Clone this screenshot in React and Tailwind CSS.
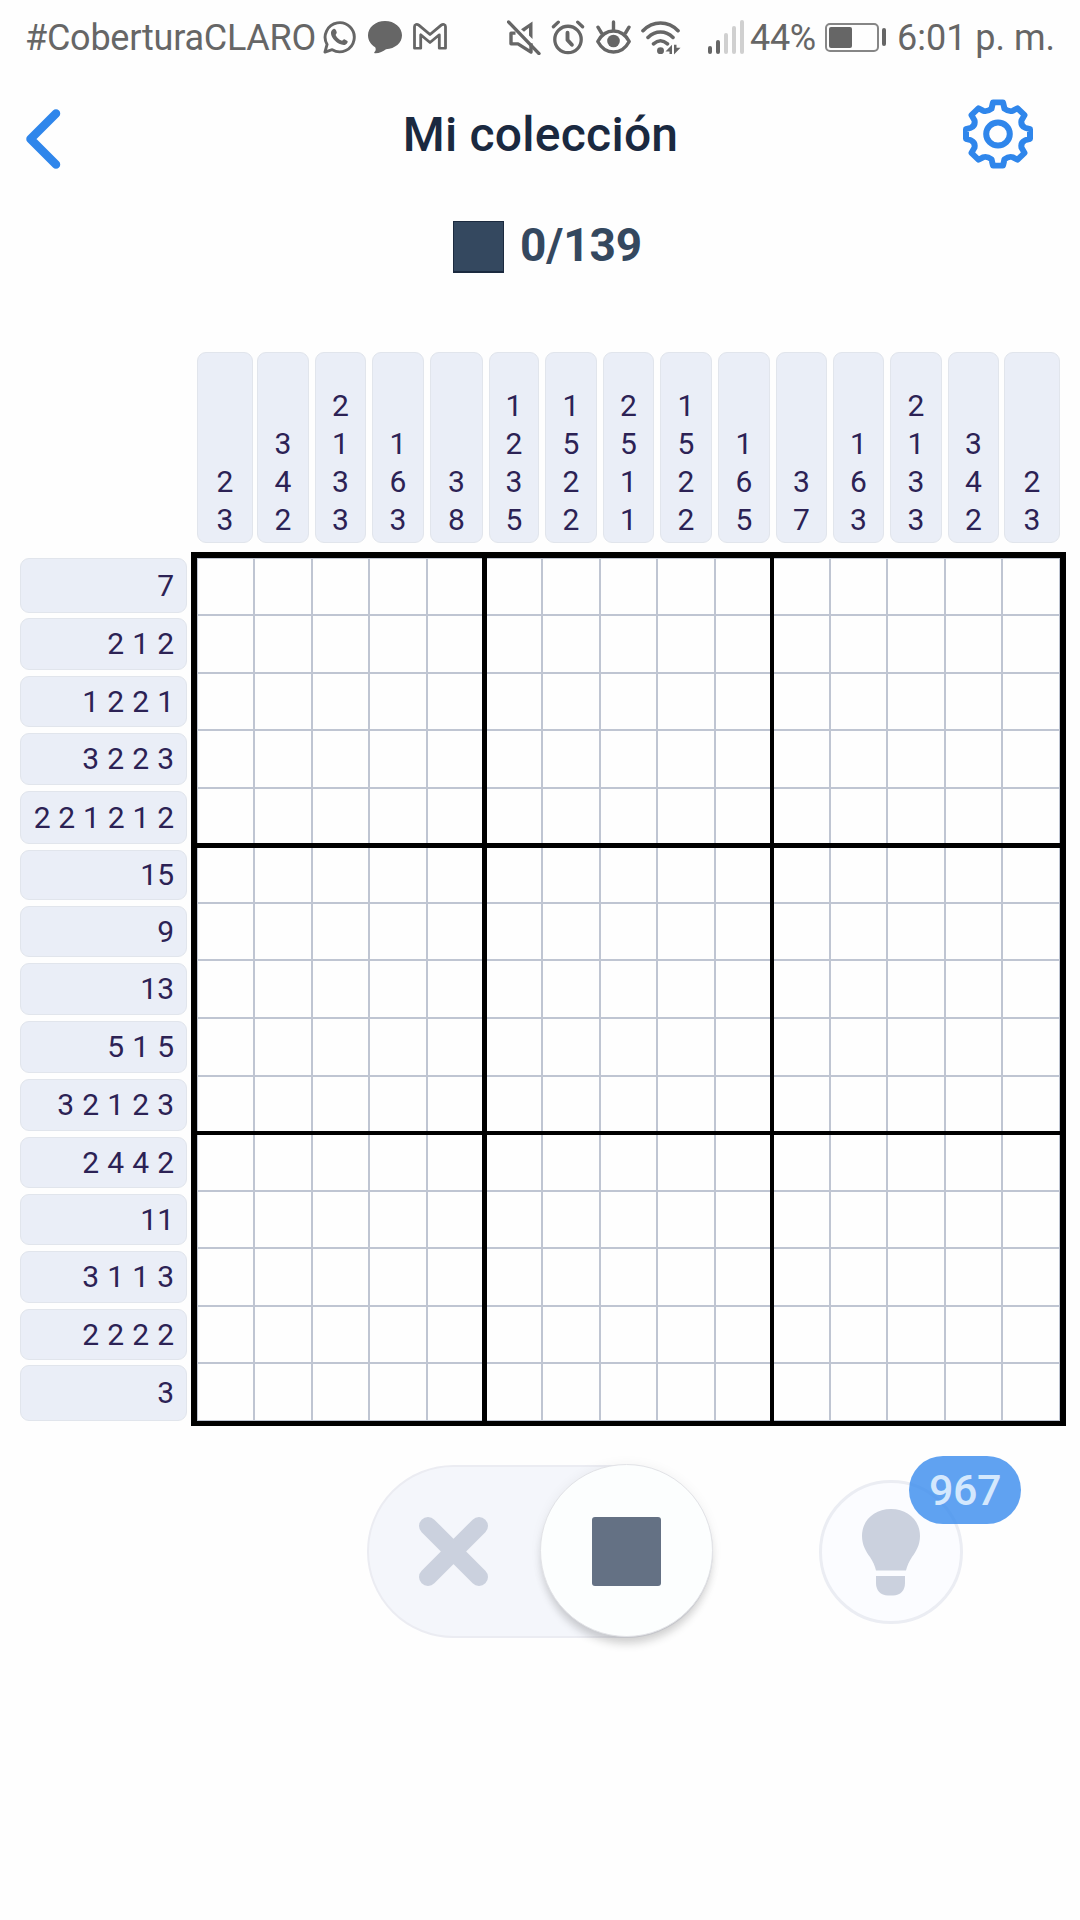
// Track sizes of the board; every track includes its trailing rule.
const TRACKS =
  "grid-cols-[58px_58px_57px_58px_59px_56px_58px_57px_58px_58px_57px_57px_58px_57px_57px]";
const ROW_TRACKS =
  "grid-rows-[58px_58px_57px_58px_59px_56px_57px_58px_58px_58px_57px_57px_58px_57px_57px]";

const COLS = [
  [2, 3], [3, 4, 2], [2, 1, 3, 3], [1, 6, 3], [3, 8],
  [1, 2, 3, 5], [1, 5, 2, 2], [2, 5, 1, 1], [1, 5, 2, 2], [1, 6, 5],
  [3, 7], [1, 6, 3], [2, 1, 3, 3], [3, 4, 2], [2, 3],
];

const ROWS = [
  "7", "2 1 2", "1 2 2 1", "3 2 2 3", "2 2 1 2 1 2",
  "15", "9", "13", "5 1 5", "3 2 1 2 3",
  "2 4 4 2", "11", "3 1 1 3", "2 2 2 2", "3",
];

function StatusBar() {
  return (
    <div className="flex h-[74px] items-center pl-[25px] text-[36px] text-[#666] leading-[72px] whitespace-nowrap">
      <span className="w-[298px] pt-[2px] tracking-[-0.25px]">#CoberturaCLARO</span>
      <svg className="h-[34px] w-[33px] shrink-0" viewBox="0 0 34 35" fill="none">
        <path d="M2 33 L4.2 25.2 A15 15 0 1 1 9.5 30.6 Z" stroke="#666" strokeWidth="3" strokeLinejoin="round" />
        <path d="M10.5 9.5 C12 8.5 13 9.5 14 12 C14.8 14 12.5 14.5 13.3 16 C14.5 18.5 16.5 20.2 19 21.2 C20.5 21.7 20.8 19.2 22.5 20 L25.2 21.6 C26 22.8 24.3 25.8 21.5 25.8 C15 25.8 8.2 18.5 8.2 13.5 C8.2 11.5 9.2 10.2 10.5 9.5 Z" fill="#666" />
      </svg>
      <svg className="ml-[12px] h-[34px] w-[34px] shrink-0" viewBox="0 0 34 34" fill="#666">
        <path d="M17 1 C26.5 1 34 7.4 34 15.3 C34 23.2 27 28.7 18 29.2 C15 31.5 11 33.6 6.8 33.3 C6 33 6 32.6 6.5 32 C8 30.5 8 29 7.2 27.2 C3 25 0 20.6 0 15.3 C0 7.4 7.5 1 17 1 Z" />
      </svg>
      <svg className="-mt-px ml-[11px] h-[27px] w-[34px] shrink-0" viewBox="0 0 34 28" preserveAspectRatio="none" fill="none" stroke="#666" strokeWidth="2.8" strokeLinejoin="round">
        <path d="M1.5 26.2 V3.8 C1.5 1.3 4 0.8 5.8 2.2 L17 12 L28.2 2.2 C30 0.8 32.5 1.3 32.5 3.8 V26.2 H26.3 V12.2 L17 20.2 L7.7 12.2 V26.2 Z" />
      </svg>
      <svg className="ml-[60px] h-[35px] w-[34px] shrink-0" viewBox="0 0 34 36" preserveAspectRatio="none" fill="none" stroke="#666" strokeWidth="3.4" strokeLinejoin="round">
        <path d="M8.5 13.5 H4 V24.5 H11 L24 33 V24" />
        <path d="M14 9.5 L25.5 1.5 V19.5 L22 16 V8 L17 12 Z" fill="#666" stroke="none" />
        <path d="M1.5 2 L32 34.5" strokeLinecap="round" />
      </svg>
      <svg className="ml-[10px] h-[35px] w-[34px] shrink-0" viewBox="0 0 34 36" fill="none" stroke="#666" strokeWidth="3.4" strokeLinecap="round">
        <circle cx="17" cy="20" r="13.6" />
        <path d="M16.5 13 V20.5 L21 25.5" strokeWidth="4" strokeLinejoin="round" />
        <path d="M2 7 L7 2.2 M32 7 L27 2.2" />
      </svg>
      <svg className="ml-[11px] h-[34px] w-[35px] shrink-0" viewBox="0 0 35 34" fill="none" stroke="#666" strokeWidth="3.4" strokeLinecap="round" strokeLinejoin="round">
        <path d="M1.8 21.5 C5 15.5 10.5 11 17.5 11 C24.5 11 30 15.5 33.2 21.5 C30 27.5 24.5 32 17.5 32 C10.5 32 5 27.5 1.8 21.5 Z" />
        <circle cx="17.5" cy="21" r="6.3" fill="#666" stroke="none" />
        <path d="M17.5 10 V2 M5.5 13 L2 7.2 M29.5 13 L33 7.2" />
      </svg>
      <svg className="ml-[10px] h-[35px] w-[40px] shrink-0" viewBox="0 0 40 36" preserveAspectRatio="none" fill="none" stroke="#666" strokeWidth="3.6" strokeLinecap="round">
        <path d="M2 11 C12 0.5 27 0.5 37 11 M7 18 C14.5 10.5 24.5 10.5 32 18 M12.5 24.5 C17 20.5 22 20.5 26.5 24.5" />
        <circle cx="19.5" cy="31.5" r="3.5" fill="#666" stroke="none" />
        <path d="M31 25.5 V35 H28.5 V32.5 H24.5 Z M33 25.5 H35.5 V28.5 H39.5 L33 35.5 Z" fill="#666" stroke="none" />
      </svg>
      <div className="ml-[27px] flex h-[34px] w-[36px] shrink-0 items-end justify-between">
        <span className="h-[8px] w-[4px] rounded-full bg-[#666]" />
        <span className="h-[14px] w-[4px] rounded-full bg-[#666]" />
        <span className="h-[21px] w-[4px] rounded-full bg-[#d0d0d0]" />
        <span className="h-[28px] w-[4px] rounded-full bg-[#d0d0d0]" />
        <span className="h-[34px] w-[4px] rounded-full bg-[#d0d0d0]" />
      </div>
      <span className="ml-[6px] w-[75px] pt-[2px] tracking-[-0.3px]">44%</span>
      <div className="h-[29px] w-[54px] shrink-0 rounded-[5px] border-2 border-[#868686] p-[2px]">
        <div className="h-full w-[23px] rounded-[2px] bg-[#666]" />
      </div>
      <div className="ml-[3px] h-[18px] w-[4px] shrink-0 rounded-full bg-[#666]" />
      <span className="ml-[11px] pt-[2px]">6:01 p. m.</span>
    </div>
  );
}

// Eight-toothed outline around a ring.
function Gear() {
  return (
    <svg className="h-[70px] w-[70px]" viewBox="-35 -36 70 72" preserveAspectRatio="none" fill="none" stroke="#2f86eb" strokeWidth="6" strokeLinejoin="round">
      <path d="M-5 -32.5 H5 L6.5 -26 Q11 -22.5 15 -24 L19.5 -26.5 L26.5 -19.5 L23.5 -14 Q22.5 -8.5 27 -6.5 L32 -5 V5 L27 6.5 Q22.5 8.5 23.5 14 L26.5 19.5 L19.5 26.5 L15 24 Q11 22.5 6.5 26 L5 32.5 H-5 L-6.5 26 Q-11 22.5 -15 24 L-19.5 26.5 L-26.5 19.5 L-23.5 14 Q-22.5 8.5 -27 6.5 L-32 5 V-5 L-27 -6.5 Q-22.5 -8.5 -23.5 -14 L-26.5 -19.5 L-19.5 -26.5 L-15 -24 Q-11 -22.5 -6.5 -26 Z" />
      <circle r="11.8" />
    </svg>
  );
}

function Header() {
  return (
    <header className="grid h-[120px] grid-cols-[1fr_auto_1fr] items-center pr-[47px] pl-[25px]">
      <svg className="mt-[9px] h-[60px] w-[36px]" viewBox="0 0 36 60" fill="none" stroke="#2f86eb" strokeWidth="8.5" strokeLinecap="round" strokeLinejoin="round">
        <path d="M31 4.5 L5.5 30 L31 55.5" />
      </svg>
      <h1 className="mt-[2px] mr-[-23px] text-[48px] font-medium tracking-[0.25px] text-[#1a2940]">Mi colección</h1>
      <div className="flex justify-end">
        <Gear />
      </div>
    </header>
  );
}

function ColumnClue({ clue, index }) {
  const edge = index === 0 ? "ml-0 mr-[2px]" : index === 14 ? "ml-[1px] mr-0" : "ml-[2px] mr-[4px]";
  return (
    <div className={`flex h-[191px] flex-col items-center justify-end rounded-[9px] border border-[#e1e5ec] bg-[#eaeef7] pb-[2.5px] ${edge}`}>
      {clue.map((n, i) => (
        <span key={i} className="h-[38.25px] leading-[38.25px]">{n}</span>
      ))}
    </div>
  );
}

function RowClue({ clue, index }) {
  const edge = index === 0 ? "mb-[3px]" : index === 14 ? "mt-[1px]" : "mt-[2px] mb-[4px]";
  const spacing = clue.length > 9 ? "[word-spacing:0.4px]" : "[word-spacing:0.7px]";
  return (
    <div className={`flex items-center justify-end rounded-[9px] border border-[#e1e5ec] bg-[#eaeef7] pr-[12px] pb-px whitespace-nowrap ${edge} ${spacing}`}>
      {clue}
    </div>
  );
}

// The heavy block rules are the cell's black padding; the thin rules are borders of its inner box.
function Cell({ r, c }) {
  const padRight = c === 4 ? "pr-[5px]" : c === 9 ? "pr-[4px]" : "";
  const padBottom = r === 4 ? "pb-[5px]" : r === 9 ? "pb-[4px]" : "";
  const right = c === 14 ? "border-r" : c % 5 === 4 ? "" : "border-r-2";
  const bottom = r === 14 ? "border-b" : r % 5 === 4 ? "" : "border-b-2";
  const left = c === 0 ? "border-l" : "";
  const top = r === 0 ? "border-t" : "";
  return (
    <div className={`bg-black ${padRight} ${padBottom}`}>
      <div className={`h-full border-[#bfc5d2] bg-[#fefefe] ${right} ${bottom} ${left} ${top}`} />
    </div>
  );
}

function Board() {
  return (
    <main className="mt-[79px] ml-[20px] grid w-[1046px] grid-cols-[167px_875px] gap-x-[4px] text-[30px] text-[#2c2255]">
      <div />
      <div className={`ml-[6px] grid h-[200px] w-[864px] ${TRACKS}`}>
        {COLS.map((clue, i) => (
          <ColumnClue key={i} clue={clue} index={i} />
        ))}
      </div>
      <div className={`grid pt-[6px] ${ROW_TRACKS}`}>
        {ROWS.map((clue, i) => (
          <RowClue key={i} clue={clue} index={i} />
        ))}
      </div>
      <div className={`grid border-6 border-b-5 border-black ${TRACKS} ${ROW_TRACKS}`}>
        {ROWS.map((_, r) => COLS.map((_, c) => <Cell key={`${r}-${c}`} r={r} c={c} />))}
      </div>
    </main>
  );
}

function Controls() {
  return (
    <footer className="mt-[39px] flex items-start">
      <div className="ml-[367px] flex h-[173px] w-[346px] rounded-full border-2 border-[#ebecf2] bg-[#f4f6fb]">
        <div className="flex w-[171px] items-center justify-center">
          <svg className="h-[69px] w-[69px] translate-x-[-1px]" viewBox="0 0 69 69" stroke="#cbd1de" strokeWidth="18" strokeLinecap="round">
            <path d="M9 9 L60 60 M60 9 L9 60" />
          </svg>
        </div>
        <div className="-mt-[3px] -mr-[2px] flex size-[173px] shrink-0 items-center justify-center rounded-full border border-[#e2e3e7] bg-[#fcfefe] shadow-[0_9px_9px_-2px_rgba(0,0,0,0.16),0_0_12px_rgba(0,0,0,0.05)]">
          <div className="mt-[2px] size-[69px] rounded-[3px] bg-[#647184]" />
        </div>
      </div>
      <div className="relative mt-[15px] ml-[106px] flex size-[144px] items-center justify-center rounded-full border-[3px] border-[#ebedf3] bg-[#fbfcff]">
        <svg className="h-[87px] w-[58px]" viewBox="0 0 58 87" fill="#cbd1de">
          <path d="M29 0 C46 0 58 11.5 58 27 C58 36 54 42.5 50 48 C47 52.5 45 57 44 61.5 H14 C13 57 11 52.5 8 48 C4 42.5 0 36 0 27 C0 11.5 12 0 29 0 Z" />
          <path d="M14 67 H43 V74 C43 81.5 38.5 86.5 31 86.5 H26 C18.5 86.5 14 81.5 14 74 Z" />
        </svg>
        <span className="absolute -top-[27px] left-[87px] flex h-[68px] w-[112px] items-center justify-center rounded-full bg-[#388bee]/80 text-[43px] leading-none font-medium tracking-[-0.5px] text-[#d4e8fd]">967</span>
      </div>
    </footer>
  );
}

export default function App() {
  return (
    <div className="h-[1920px] w-[1080px] overflow-hidden bg-[#fefefe] font-['Roboto',sans-serif]">
      <StatusBar />
      <Header />
      <div className="flex h-[79px] items-end pl-[453px]">
        <div className="h-[52px] w-[51px] border border-b-2 border-[#1b2a3f] bg-[#34485f]" />
        <span className="ml-[16px] text-[46px] leading-[56px] font-bold tracking-[-0.1px] text-[#34485f]">0/139</span>
      </div>
      <Board />
      <Controls />
    </div>
  );
}
